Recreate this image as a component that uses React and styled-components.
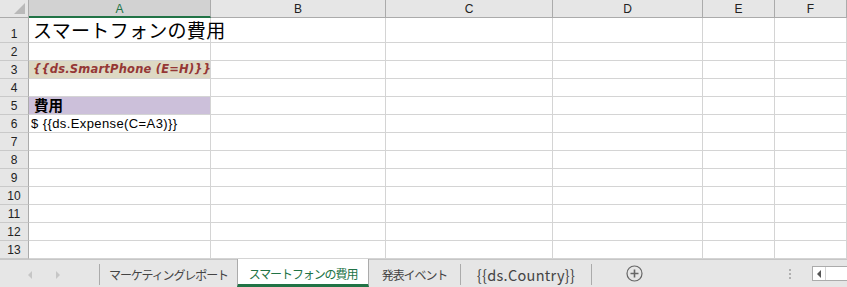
import React from 'react';
import styled, { createGlobalStyle } from 'styled-components';

const Global = createGlobalStyle`
  html, body { margin: 0; padding: 0; background: #fff; }
  body { font-family: "Noto Sans CJK JP", "Noto Sans", sans-serif; overflow: hidden; }
  * { box-sizing: border-box; }
`;

const COLS = [29, 182, 175, 167, 150, 72, 72];
const LETTERS = ['A', 'B', 'C', 'D', 'E', 'F', ''];
const ROW_H = [25, 18, 18, 18, 18, 18, 18, 18, 18, 18, 18, 18, 18];

const Window = styled.div`
  width: 847px;
  height: 287px;
  display: flex;
  flex-direction: column;
  overflow: hidden;
`;

const Grid = styled.div`
  display: grid;
  grid-template-columns: ${COLS.map((c) => c + 'px').join(' ')} 1fr;
  grid-template-rows: 18px ${ROW_H.map((h) => h + 'px').join(' ')};
  height: 259px;
  overflow: hidden;
`;

const Corner = styled.div`
  background: #e6e6e6;
  border-right: 1px solid #ababab;
  border-bottom: 1px solid #ababab;
  position: relative;
  &::after {
    content: '';
    position: absolute;
    right: 3px;
    bottom: 3px;
    width: 0;
    height: 0;
    border-left: 11px solid transparent;
    border-bottom: 11px solid #b9b9b9;
  }
`;

const ColHead = styled.div`
  background: ${(p) => (p.$active ? '#d2d2d2' : '#e6e6e6')};
  border-right: 1px solid #ababab;
  border-bottom: ${(p) => (p.$active ? '2px solid #217346' : '1px solid #ababab')};
  color: ${(p) => (p.$active ? '#217346' : '#222')};
  font-family: "Liberation Sans", Arial, sans-serif;
  font-size: 12px;
  display: flex;
  align-items: center;
  justify-content: center;
  padding-top: ${(p) => (p.$active ? '2px' : '1px')};
`;

const RowHead = styled.div`
  background: #e6e6e6;
  border-right: 1px solid #ababab;
  border-bottom: 1px solid #c9c9c9;
  color: #222;
  font-family: "Liberation Sans", Arial, sans-serif;
  font-size: 12px;
  display: flex;
  align-items: flex-end;
  justify-content: center;
  padding-bottom: 1px;
`;

const Cell = styled.div`
  background: ${(p) => p.$bg || '#fff'};
  border-right: ${(p) => (p.$noRight ? 'none' : '1px solid #d4d4d4')};
  border-bottom: 1px solid #d4d4d4;
  white-space: nowrap;
  overflow: visible;
  position: relative;
  z-index: ${(p) => (p.$text ? 1 : 0)};
  display: flex;
  align-items: flex-end;
  padding-left: 4px;
  padding-bottom: 1px;
`;

const Title = styled.span`
  font-size: 19px;
  line-height: 22px;
  color: #000;
  letter-spacing: 0.3px;
`;

const Tag = styled.span`
  font-family: "DejaVu Sans", sans-serif;
  font-size: 11.5px;
  font-weight: bold;
  font-style: italic;
  color: #953735;
  line-height: 15px;
  letter-spacing: 0.2px;
`;

const Bold = styled.span`
  font-size: 14.5px;
  font-weight: bold;
  color: #000;
  line-height: 17px;
  padding-left: 1px;
`;

const Plain = styled.span`
  font-family: "Liberation Sans", Arial, sans-serif;
  font-size: 13px;
  color: #000;
  line-height: 15px;
  margin-left: -2px;
  letter-spacing: 0.4px;
`;

const TabBar = styled.div`
  height: 28px;
  background: #e6e6e6;
  border-top: 1px solid #c6c6c6;
  display: flex;
  align-items: stretch;
`;

const Nav = styled.div`
  width: 100px;
  flex-shrink: 0;
  display: flex;
  align-items: center;
  gap: 24px;
  padding-left: 28px;
  border-right: 1px solid #ababab;
  margin: 4px 0 2px;
`;

const Arrow = styled.span`
  width: 0;
  height: 0;
  border-top: 4px solid transparent;
  border-bottom: 4px solid transparent;
  ${(p) => (p.$dir === 'left' ? 'border-right: 4px solid #c6c6c6;' : 'border-left: 4px solid #c6c6c6;')}
`;

const Tab = styled.div`
  width: ${(p) => p.$w}px;
  flex-shrink: 0;
  white-space: nowrap;
  display: flex;
  align-items: center;
  justify-content: center;
  font-size: ${(p) => (p.$latin ? '14.5px' : '12px')};
  letter-spacing: ${(p) => (p.$latin ? '0.3px' : '-1.1px')};
  color: ${(p) => (p.$active ? '#217346' : '#444')};
  background: ${(p) => (p.$active ? '#fff' : 'transparent')};
  margin-top: ${(p) => (p.$active ? '-1px' : '0')};
  border-left: ${(p) => (p.$active ? '1px solid #ababab' : 'none')};
  border-right: ${(p) => (p.$active ? '1px solid #ababab' : 'none')};
  border-bottom: ${(p) => (p.$active ? '3px solid #217346' : 'none')};
  padding-top: ${(p) => (p.$active ? '4px' : '1px')};
`;

const Sep = styled.div`
  width: 1px;
  flex-shrink: 0;
  background: #ababab;
  margin: 4px 0 2px;
`;

const AddWrap = styled.div`
  width: 84px;
  display: flex;
  align-items: center;
  justify-content: center;
`;

const Dots = styled.div`
  margin-left: auto;
  width: 20px;
  display: flex;
  flex-direction: column;
  align-items: center;
  justify-content: center;
  gap: 2px;
  margin-right: 12px;
  span {
    width: 2px;
    height: 2px;
    background: #b0b0b0;
  }
`;

const Scroll = styled.div`
  width: 35px;
  margin: 6px 0 6px;
  border: 1px solid #ababab;
  border-right: none;
  background: #fff;
  display: flex;
  align-items: center;
  span {
    width: 13px;
    height: 100%;
    border-right: 1px solid #d4d4d4;
    display: flex;
    align-items: center;
    justify-content: center;
  }
  span::before {
    content: '';
    border-top: 4px solid transparent;
    border-bottom: 4px solid transparent;
    border-right: 4px solid #555;
  }
`;

const cellContent = {
  '0-0': { el: <Title>スマートフォンの費用</Title> },
  '2-0': { el: <Tag>{'{{ds.SmartPhone (E=H)}}'}</Tag>, bg: '#ddd9c4' },
  '4-0': { el: <Bold>費用</Bold>, bg: '#ccc0da' },
  '5-0': { el: <Plain>{'$ {{ds.Expense(C=A3)}}'}</Plain> },
};

export default function App() {
  return (
    <Window>
      <Global />
      <Grid>
        <Corner />
        {LETTERS.map((l, i) => (
          <ColHead key={'h' + i} $active={i === 0}>{l}</ColHead>
        ))}
        {ROW_H.map((_, r) => (
          <React.Fragment key={'r' + r}>
            <RowHead>{r + 1}</RowHead>
            {LETTERS.map((_, c) => {
              const info = cellContent[r + '-' + c];
              return (
                <Cell key={c} $bg={info && info.bg} $text={!!info} $noRight={c === 6}>
                  {info && info.el}
                </Cell>
              );
            })}
          </React.Fragment>
        ))}
      </Grid>
      <TabBar>
        <Nav>
          <Arrow $dir="left" />
          <Arrow $dir="right" />
        </Nav>
        <Tab $w={137}>マーケティングレポート</Tab>
        <Tab $w={132} $active>スマートフォンの費用</Tab>
        <Tab $w={91}>発表イベント</Tab>
        <Sep />
        <Tab $w={130} $latin>{'{{ds.Country}}'}</Tab>
        <Sep />
        <AddWrap>
          <svg width="17" height="17" viewBox="0 0 17 17">
            <circle cx="8.5" cy="8.5" r="7.5" fill="none" stroke="#666" strokeWidth="1.2" />
            <path d="M8.5 4.5v8M4.5 8.5h8" stroke="#666" strokeWidth="1.6" />
          </svg>
        </AddWrap>
        <Dots>
          <span />
          <span />
          <span />
        </Dots>
        <Scroll>
          <span />
        </Scroll>
      </TabBar>
    </Window>
  );
}
